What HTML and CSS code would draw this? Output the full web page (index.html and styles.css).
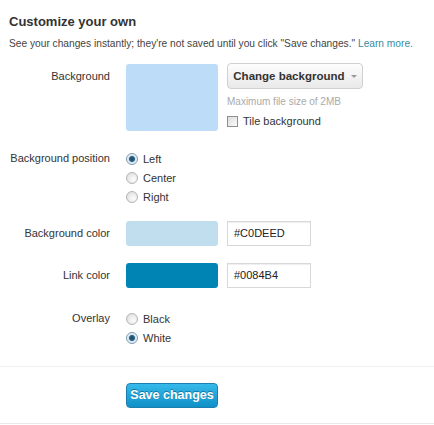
FILE: index.html
```html
<!DOCTYPE html>
<html>
<head>
<title>Design settings</title>
<link rel="stylesheet" href="styles.css">
</head>
<body>

<div class="panel">
  <h2>Customize your own</h2>
  <div class="intro">See your changes instantly; they're not saved until you click "Save changes." <a href="#">Learn more.</a></div>

  <div class="row row-bg">
    <div class="label">Background</div>
    <div class="field field-bg">
      <div class="swatch swatch-bg"></div>
      <div class="upload">
        <span class="btn">Change background <span class="caret"></span></span>
        <div class="hint">Maximum file size of 2MB</div>
        <label class="check"><span class="box"></span>Tile background</label>
      </div>
    </div>
  </div>

  <div class="row row-pos">
    <div class="label">Background position</div>
    <div class="field">
      <label class="radio"><span class="dot on"></span>Left</label>
      <label class="radio"><span class="dot"></span>Center</label>
      <label class="radio"><span class="dot"></span>Right</label>
    </div>
  </div>

  <div class="row row-color">
    <div class="label">Background color</div>
    <div class="field field-color">
      <div class="swatch swatch-sm" style="background: #c0deed"></div>
      <div class="hex">#C0DEED</div>
    </div>
  </div>

  <div class="row row-color row-link">
    <div class="label">Link color</div>
    <div class="field field-color">
      <div class="swatch swatch-sm" style="background: #0084b4"></div>
      <div class="hex">#0084B4</div>
    </div>
  </div>

  <div class="row row-overlay">
    <div class="label">Overlay</div>
    <div class="field">
      <label class="radio"><span class="dot"></span>Black</label>
      <label class="radio"><span class="dot on"></span>White</label>
    </div>
  </div>

  <div class="actions">
    <span class="save">Save changes</span>
  </div>
</div>

</body>
</html>
```

FILE: styles.css
```css
body {
  margin: 0;
  background: #fff;
  font-family: "Liberation Sans", Arial, sans-serif;
  color: #333;
}

.panel {
  padding-top: 13px;
  border-bottom: 1px solid #e8e8e8;
  height: 410px;
}

h2 {
  font-size: 13px;
  font-weight: bold;
  line-height: 18px;
  margin: 0 0 0 9px;
}

.intro {
  font-size: 10.2px;
  line-height: 14px;
  margin: 6px 0 0 9px;
  color: #444;
}

.intro a {
  color: #3a8aa0;
  text-decoration: none;
}

.row {
  display: grid;
  grid-template-columns: 110px auto;
  column-gap: 16px;
  font-size: 11px;
}

.label {
  text-align: right;
  color: #333;
}

.row-bg {
  margin-top: 12px;
}

.row-bg .label {
  padding-top: 7px;
}

.field-bg {
  display: flex;
  gap: 9px;
}

.swatch {
  width: 92px;
  border-radius: 3px;
}

.swatch-bg {
  height: 67px;
  margin-top: 1px;
  background: #bddcf8;
}

.upload {
  display: flex;
  flex-direction: column;
}

.btn {
  display: inline-block;
  width: 134px;
  height: 24px;
  line-height: 24px;
  box-sizing: content-box;
  border: 1px solid #d0d0d0;
  border-radius: 4px;
  background: linear-gradient(#fdfdfd, #e9e9e9);
  font-weight: bold;
  font-size: 11.5px;
  color: #333;
  text-align: center;
}

.caret {
  display: inline-block;
  width: 0;
  height: 0;
  margin-left: 3px;
  vertical-align: middle;
  border-left: 3px solid transparent;
  border-right: 3px solid transparent;
  border-top: 3px solid #999;
}

.hint {
  font-size: 10px;
  color: #aaa;
  margin-top: 7px;
}

.check {
  display: flex;
  align-items: center;
  margin-top: 8px;
  color: #333;
}

.box {
  width: 9px;
  height: 9px;
  border: 1px solid #8e8e8e;
  background: linear-gradient(135deg, #dcdcdc, #fbfbfb);
  margin-right: 5px;
}

.row-pos {
  margin-top: 18px;
}

.row-pos .label,
.row-overlay .label {
  line-height: 19px;
}

.radio {
  display: flex;
  align-items: center;
  height: 19px;
}

.dot {
  position: relative;
  width: 10px;
  height: 10px;
  border: 1px solid #b4b4b4;
  border-radius: 50%;
  background: radial-gradient(circle at 65% 65%, #fcfcfc, #dadada);
  margin-right: 5px;
}

.dot.on {
  border-color: #7a98ae;
  background: radial-gradient(circle, #1d4a66 0, #2c5f80 2.5px, #cfe1ee 3.5px, #f4f8fb 5px);
}

.row-color {
  margin-top: 15px;
}

.row-link {
  margin-top: 17px;
}

.row-color .label {
  line-height: 25px;
}

.field-color {
  display: flex;
  gap: 9px;
}

.swatch-sm {
  height: 25px;
}

.hex {
  width: 76px;
  height: 23px;
  line-height: 23px;
  border: 1px solid #d8d8d8;
  box-shadow: inset 0 1px 1px #eee;
  padding-left: 6px;
  font-size: 11px;
  color: #222;
}

.row-overlay {
  margin-top: 21px;
}

.actions {
  margin-top: 19px;
  border-top: 1px solid #f0f0f0;
  padding: 16px 0 0 126px;
}

.save {
  display: inline-block;
  width: 90px;
  height: 23px;
  line-height: 23px;
  border: 1px solid #1c7fae;
  border-radius: 4px;
  background: linear-gradient(#36b9ea, #0f90c8);
  color: #fff;
  font-weight: bold;
  font-size: 12.5px;
  text-align: center;
  text-shadow: 0 -1px 0 #1277a6;
}
```
